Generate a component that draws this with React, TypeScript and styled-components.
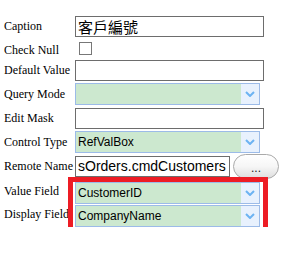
import React from "react";
import styled, { createGlobalStyle } from "styled-components";

const Global = createGlobalStyle`
  html, body { margin: 0; padding: 0; background: #ffffff; }
  body { font-family: "Liberation Serif", "Times New Roman", serif; color: #000; }
`;

const Form = styled.div`
  display: flex;
  flex-direction: column;
  gap: 2px;
  padding: 16px 0 0 4px;
`;

const Row = styled.div<{ $h: number; $align?: string; $mb?: number }>`
  display: flex;
  align-items: ${(p) => p.$align || "center"};
  height: ${(p) => p.$h}px;
  margin-bottom: ${(p) => p.$mb || 0}px;
`;

const Label = styled.div<{ $w?: number }>`
  width: ${(p) => p.$w || 71}px;
  flex: none;
  font-size: 12px;
  white-space: nowrap;
`;

const TextInput = styled.input<{ $w: number }>`
  box-sizing: border-box;
  width: ${(p) => p.$w}px;
  height: 21px;
  margin: 0;
  padding: 0 2px;
  border: 1px solid #6d6d6d;
  background: #fff;
  font-family: "Liberation Sans", Arial, "Noto Sans CJK TC", sans-serif;
  font-size: 14px;
  color: #000;
  outline: none;
`;

const CaptionInput = styled(TextInput)`
  font-size: 15px;
`;

const Check = styled.input`
  appearance: none;
  box-sizing: border-box;
  width: 13px;
  height: 13px;
  margin: 0 0 3px 4px;
  border: 1px solid #777;
  background: #fff;
`;

const SelectBox = styled.div`
  box-sizing: border-box;
  display: flex;
  width: 185px;
  height: 22px;
  border: 1px solid #9cbbe8;
  background: #cce8cf;
  flex: none;
`;

const SelectText = styled.div`
  flex: 1;
  padding-left: 2px;
  display: flex;
  align-items: center;
  font-family: "Liberation Sans", Arial, sans-serif;
  font-size: 12px;
  color: #000;
  white-space: nowrap;
  overflow: hidden;
`;

const SelectArrow = styled.div`
  width: 18px;
  background: #e8f1fd;
  display: flex;
  align-items: center;
  justify-content: center;
`;

const EllipsisButton = styled.button`
  box-sizing: border-box;
  width: 46px;
  height: 25px;
  margin-left: 3px;
  padding: 4px 0 0;
  border: 1px solid #aaaaaa;
  border-radius: 13px;
  background: linear-gradient(#ffffff 0%, #f6f6f6 50%, #dedede 100%);
  font-family: "Liberation Sans", Arial, sans-serif;
  font-size: 12px;
  color: #222;
  flex: none;
`;

const Group = styled.div`
  display: flex;
  margin-top: 3px;
`;

const LabelStack = styled.div`
  display: flex;
  flex-direction: column;
  gap: 1px;
  width: 69px;
`;

const StackLabel = styled(Label)`
  height: 22px;
  padding-top: 2px;
  box-sizing: border-box;
`;

const Highlight = styled.div`
  display: flex;
  flex-direction: column;
  gap: 1px;
  width: 190px;
  box-sizing: border-box;
  padding: 0 4px 0 2px;
  outline: 5px solid #ed1c24;
`;

function Select({ value }: { value: string }) {
  return (
    <SelectBox>
      <SelectText>{value}</SelectText>
      <SelectArrow>
        <svg width="10" height="6" viewBox="0 0 10 6">
          <polyline points="1,1 5,5 9,1" fill="none" stroke="#6cb3f2" strokeWidth="2" />
        </svg>
      </SelectArrow>
    </SelectBox>
  );
}

export default function App() {
  return (
    <>
      <Global />
      <Form>
        <Row $h={21}>
          <Label>Caption</Label>
          <CaptionInput $w={189} defaultValue="客戶編號" />
        </Row>
        <Row $h={19} $align="flex-end">
          <Label>Check Null</Label>
          <Check type="checkbox" />
        </Row>
        <Row $h={21}>
          <Label>Default Value</Label>
          <TextInput $w={189} defaultValue="" />
        </Row>
        <Row $h={22} $mb={1}>
          <Label>Query Mode</Label>
          <Select value="" />
        </Row>
        <Row $h={21}>
          <Label>Edit Mask</Label>
          <TextInput $w={189} defaultValue="" />
        </Row>
        <Row $h={22}>
          <Label>Control Type</Label>
          <Select value="RefValBox" />
        </Row>
        <Row $h={22}>
          <Label>Remote Name</Label>
          <TextInput $w={155} defaultValue="sOrders.cmdCustomers" />
          <EllipsisButton>...</EllipsisButton>
        </Row>
        <Group>
          <LabelStack>
            <StackLabel>Value Field</StackLabel>
            <StackLabel>Display Field</StackLabel>
          </LabelStack>
          <Highlight>
            <Select value="CustomerID" />
            <Select value="CompanyName" />
          </Highlight>
        </Group>
      </Form>
    </>
  );
}
